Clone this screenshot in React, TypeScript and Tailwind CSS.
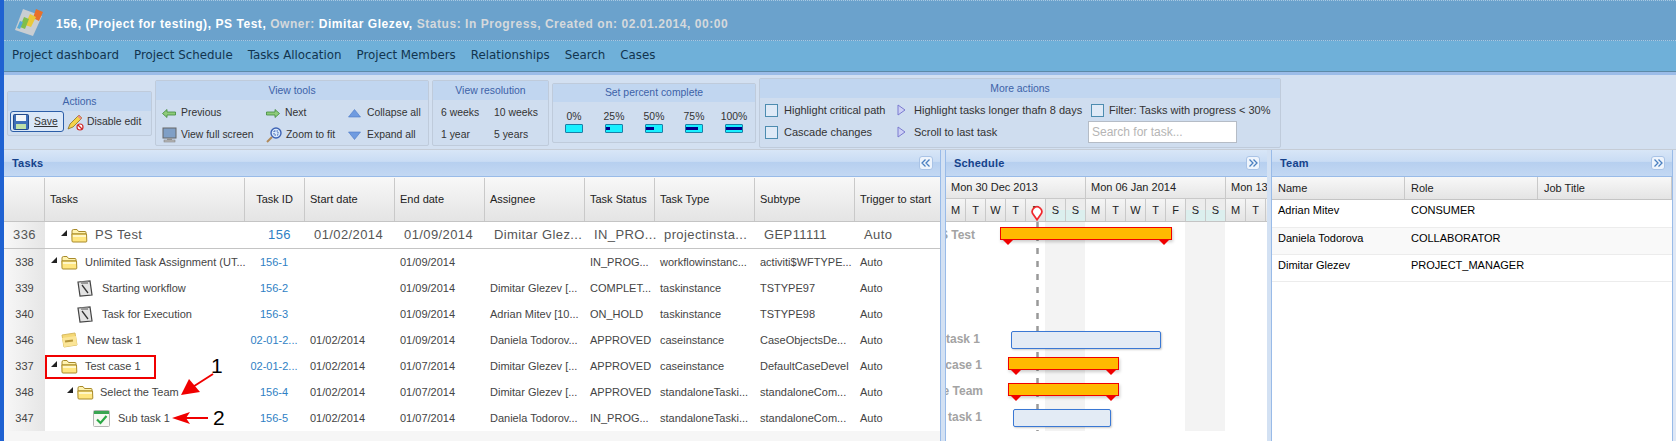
import React from "react";

const ui = "font-['Liberation_Sans',Arial,sans-serif] text-[11px]";

const cols = [
  "w-[41px]",
  "w-[200px]",
  "w-[60px]",
  "w-[90px]",
  "w-[90px]",
  "w-[100px]",
  "w-[70px]",
  "w-[100px]",
  "w-[100px]",
  "w-[84px]",
];

const headers = ["", "Tasks", "Task ID", "Start date", "End date", "Assignee", "Task Status", "Task Type", "Subtype", "Trigger to start"];

type IconKind = "folder" | "note" | "case" | "check";

interface IRow {
  num: string;
  name: string;
  pad: string;
  icon: IconKind;
  arrow?: boolean;
  textGap: string;
  id: string;
  start: string;
  end: string;
  assignee: string;
  status: string;
  type: string;
  sub: string;
}

const rows: IRow[] = [
  { num: "338", name: "Unlimited Task Assignment (UT...", pad: "pl-[6px]", icon: "folder", arrow: true, textGap: "ml-[7px]", id: "156-1", start: "", end: "01/09/2014", assignee: "", status: "IN_PROG...", type: "workflowinstanc...", sub: "activiti$WFTYPE..." },
  { num: "339", name: "Starting workflow", pad: "pl-[32px]", icon: "note", textGap: "ml-[9px]", id: "156-2", start: "", end: "01/09/2014", assignee: "Dimitar Glezev [...", status: "COMPLET...", type: "taskinstance", sub: "TSTYPE97" },
  { num: "340", name: "Task for Execution", pad: "pl-[32px]", icon: "note", textGap: "ml-[9px]", id: "156-3", start: "", end: "01/09/2014", assignee: "Adrian Mitev [10...", status: "ON_HOLD", type: "taskinstance", sub: "TSTYPE98" },
  { num: "346", name: "New task 1", pad: "pl-[16px]", icon: "case", textGap: "ml-[9px]", id: "02-01-2...", start: "01/02/2014", end: "01/09/2014", assignee: "Daniela Todorov...", status: "APPROVED", type: "caseinstance", sub: "CaseObjectsDe..." },
  { num: "337", name: "Test case 1", pad: "pl-[6px]", icon: "folder", arrow: true, textGap: "ml-[7px]", id: "02-01-2...", start: "01/02/2014", end: "01/07/2014", assignee: "Dimitar Glezev [...", status: "APPROVED", type: "caseinstance", sub: "DefaultCaseDevel" },
  { num: "348", name: "Select the Team", pad: "pl-[22px]", icon: "folder", arrow: true, textGap: "ml-[6px]", id: "156-4", start: "01/02/2014", end: "01/07/2014", assignee: "Dimitar Glezev [...", status: "APPROVED", type: "standaloneTaski...", sub: "standaloneCom..." },
  { num: "347", name: "Sub task 1", pad: "pl-[48px]", icon: "check", textGap: "ml-[8px]", id: "156-5", start: "01/02/2014", end: "01/07/2014", assignee: "Daniela Todorov...", status: "IN_PROG...", type: "standaloneTaski...", sub: "standaloneCom..." },
];

const Expander = () => (
  <svg width="6" height="6" viewBox="0 0 6 6" className="mb-[5px] mr-[4px] shrink-0">
    <polygon points="0,6 6,6 6,0" fill="#222" />
  </svg>
);

const Folder = () => (
  <svg width="17" height="15" viewBox="0 0 17 15" className="shrink-0">
    <path d="M1 3 Q1 1.5 2.5 1.5 H6 L7.5 3.5 H14 Q15 3.5 15 4.5 V6 H1 Z" fill="#fff3b0" stroke="#a88a2a" />
    <path d="M.8 6 H15.5 L15.8 13 Q15.8 14 15 14 H2 Q1 14 1 13 Z" fill="#ffe680" stroke="#a88a2a" />
    <rect x="2" y="7" width="13" height="2" fill="#fff7c8" />
  </svg>
);

const Note = () => (
  <svg width="16" height="17" viewBox="0 0 16 17" className="shrink-0">
    <path d="M1 2 L13 1 L15 15 L3 16 Z" fill="#e3e3e3" stroke="#444" strokeWidth="1.2" />
    <path d="M4 1.5 H11 V4 H4 Z" fill="#999" />
    <path d="M5 5 L11 13" stroke="#333" strokeWidth="1.3" />
  </svg>
);

const CaseIcon = () => (
  <svg width="17" height="16" viewBox="0 0 17 16" className="shrink-0">
    <path d="M1 3 L14 1 L16 13 L3 15 Z" fill="#f5d875" stroke="#d8bb60" />
    <path d="M1 6 L15 4 L16 13 L3 15 Z" fill="#fbe597" />
    <rect x="4" y="8" width="8" height="2" fill="#b59538" transform="rotate(-8 8 9)" />
  </svg>
);

const CheckIcon = () => (
  <svg width="17" height="17" viewBox="0 0 17 17" className="shrink-0">
    <rect x=".5" y=".5" width="16" height="16" rx="1" fill="#f8f8f4" stroke="#b5b5b5" />
    <rect x="1" y="1" width="15" height="3" fill="#3aa552" />
    <path d="M4 9.5 L7.5 13 L13.5 6" fill="none" stroke="#2aa845" strokeWidth="2.2" />
  </svg>
);

const TaskIcon = ({ kind }: { kind: IconKind }) => {
  if (kind === "folder") return <Folder />;
  if (kind === "note") return <Note />;
  if (kind === "case") return <CaseIcon />;
  return <CheckIcon />;
};

const Logo = () => (
  <svg width="30" height="30" viewBox="0 0 30 30" className="shrink-0">
    <path d="M9 2 L28 9 L19 29 L1 23 Z" fill="#c9ced2" />
    <path d="M22 2 L29 5 L25 14 L19 11 Z" fill="#e8702a" />
    <path d="M16 7 L22 10 L17 20 L11 18 Z" fill="#e9c93a" />
    <path d="M10 10 L15 12 L11 22 L6 20 Z" fill="#7fbe4b" />
    <path d="M6 14 L9 15 L6 22 L3 21 Z" fill="#56a9d6" />
  </svg>
);

const SideArrow = ({ dir }: { dir: "left" | "right" }) => (
  <svg width="14" height="9" viewBox="0 0 14 9" className="shrink-0">
    <path
      d={dir === "left" ? "M0.5 4.5 L5 .5 V3 H13.5 V6 H5 V8.5 Z" : "M13.5 4.5 L9 .5 V3 H.5 V6 H9 V8.5 Z"}
      fill="#8ecb7a"
      stroke="#3f8a3a"
      strokeWidth=".8"
    />
  </svg>
);

const Monitor = () => (
  <svg width="15" height="16" viewBox="0 0 15 16" className="shrink-0">
    <rect x="1" y="1" width="13" height="10" fill="#7f9fc6" stroke="#666" />
    <rect x="5" y="11" width="5" height="2" fill="#999" />
    <rect x="2" y="13" width="11" height="2" fill="#bbb" stroke="#777" strokeWidth=".5" />
  </svg>
);

const Magnifier = () => (
  <svg width="16" height="16" viewBox="0 0 16 16" className="shrink-0">
    <circle cx="10" cy="6" r="5" fill="#d8e8fa" stroke="#3e63b5" strokeWidth="1.4" />
    <path d="M8 4 H12 V8 H8 Z" fill="none" stroke="#3e63b5" strokeDasharray="1.5 1" />
    <path d="M6 10 L1 15" stroke="#b08a5a" strokeWidth="2" />
  </svg>
);

const BlueTri = ({ up }: { up?: boolean }) => (
  <svg width="13" height="9" viewBox="0 0 13 9" className="shrink-0">
    <polygon points={up ? "6.5,.5 12.5,8 .5,8" : "6.5,8.5 12.5,1 .5,1"} fill="#6f9be0" stroke="#4a78c8" strokeWidth=".6" />
  </svg>
);

const PlayTri = () => (
  <svg width="9" height="12" viewBox="0 0 9 12" className="shrink-0">
    <polygon points="1,1 8,6 1,11" fill="#cdd0f5" stroke="#7a7ad0" />
  </svg>
);

const Floppy = () => (
  <svg width="16" height="16" viewBox="0 0 16 16" className="shrink-0">
    <rect x=".5" y=".5" width="15" height="15" rx="1" fill="#3f6fb8" stroke="#234a8a" />
    <rect x="3" y="1" width="10" height="6" fill="#f3f6fa" />
    <rect x="3" y="10" width="10" height="5" fill="#bfe0a8" />
  </svg>
);

const NoEdit = () => (
  <svg width="17" height="18" viewBox="0 0 17 18" className="shrink-0">
    <path d="M1 16 L3 11 L12 2 L15 5 L6 14 Z" fill="#f4d34a" stroke="#8a6d20" strokeWidth=".8" />
    <path d="M12 2 L15 5 L13.5 6.5 L10.5 3.5 Z" fill="#e88a8a" />
    <circle cx="13" cy="14" r="3" fill="#fff" stroke="#d02a2a" strokeWidth="1.2" />
    <path d="M11 12 L15 16" stroke="#d02a2a" strokeWidth="1.2" />
  </svg>
);

const Collapse = ({ dir }: { dir: "left" | "right" }) => (
  <div className="flex h-[14px] w-[14px] items-center justify-center rounded-[3px] border border-[#a9c3e6] bg-[#eef4fc]">
    <svg width="10" height="8" viewBox="0 0 10 8">
      <path
        d={dir === "left" ? "M4.5 .5 L1 4 L4.5 7.5 M8.5 .5 L5 4 L8.5 7.5" : "M1.5 .5 L5 4 L1.5 7.5 M5.5 .5 L9 4 L5.5 7.5"}
        fill="none"
        stroke="#4a7fc0"
        strokeWidth="1.3"
      />
    </svg>
  </div>
);

const Check = () => <span className="h-[13px] w-[13px] shrink-0 border border-[#4d8cb0] bg-[#dfeaf7]" />;

const Group = ({ title, w, h, head, children }: { title: string; w: string; h: string; head: string; children: React.ReactNode }) => (
  <div className={`${w} ${h} shrink-0 rounded-[2px] border border-[#bfcbdb] bg-[#cfddef]`}>
    <div className={`${head} flex items-center justify-center bg-[#c1d6f0] text-[#3d62a8]`}>{title}</div>
    {children}
  </div>
);

const PanelHead = ({ title, dir }: { title: string; dir: "left" | "right" }) => (
  <div className="relative flex h-[27px] shrink-0 items-center justify-between border-b border-[#99bbe8] bg-[linear-gradient(#d8e6f7,#c9dcf4_44%,#b6cfef_46%,#c3d8f3)] pl-[8px] pr-[7px]">
    <span className="text-[11px] font-bold tracking-[.2px] text-[#15428b]">{title}</span>
    {dir && <Collapse dir={dir} />}
  </div>
);

const percent = [
  { label: "0%", bar: "w-0" },
  { label: "25%", bar: "w-[4px]" },
  { label: "50%", bar: "w-[8px]" },
  { label: "75%", bar: "w-[12px]" },
  { label: "100%", bar: "w-[16px]" },
];

const days = ["M", "T", "W", "T", "F", "S", "S", "M", "T", "W", "T", "F", "S", "S", "M", "T"];

const Bar = ({ cls }: { cls: string }) => (
  <div className={`absolute h-[13px] border border-[#f00000] bg-[#ffb900] shadow-[1px_2px_3px_rgba(0,0,0,.2)] ${cls}`}>
    <svg width="12" height="6" viewBox="0 0 12 6" className="absolute left-[1px] top-[11px]">
      <polygon points="0,0 12,0 6,6" fill="#f00000" />
    </svg>
    <svg width="12" height="6" viewBox="0 0 12 6" className="absolute right-[1px] top-[11px]">
      <polygon points="0,0 12,0 6,6" fill="#f00000" />
    </svg>
  </div>
);

const GanttLabel = ({ cls, text }: { cls: string; text: string }) => (
  <span className={`absolute whitespace-nowrap text-right text-[12px] font-bold text-[#a3a3a3] ${cls}`}>{text}</span>
);

const Gantt = () => (
  <div className="relative flex-1 overflow-hidden bg-white">
    <div className="absolute left-[99px] top-0 h-[209px] w-[40px] bg-[#f3f3f3]" />
    <div className="absolute left-[239px] top-0 h-[209px] w-[40px] bg-[#f3f3f3]" />
    <svg width="3" height="209" className="absolute left-[90px] top-0">
      <line x1="1.5" y1="0" x2="1.5" y2="209" stroke="#999" strokeWidth="2.5" strokeDasharray="6 7" />
    </svg>
    <GanttLabel cls="right-[292px] top-[4px]" text="PS Test" />
    <GanttLabel cls="right-[287px] top-[108px]" text="New task 1" />
    <GanttLabel cls="right-[285px] top-[134px]" text="Test case 1" />
    <GanttLabel cls="right-[284px] top-[160px]" text="Select the Team" />
    <GanttLabel cls="right-[285px] top-[186px]" text="Sub task 1" />
    <Bar cls="left-[54px] top-[5px] w-[172px]" />
    <div className="absolute left-[65px] top-[109px] h-[18px] w-[150px] rounded-[2px] border border-[#3a78d4] bg-[#e3ebf5] shadow-[1px_1px_2px_rgba(0,0,0,.2)]" />
    <Bar cls="left-[62px] top-[135px] w-[111px]" />
    <Bar cls="left-[62px] top-[161px] w-[111px]" />
    <div className="absolute left-[67px] top-[187px] h-[18px] w-[98px] rounded-[2px] border border-[#3a78d4] bg-[#e3ebf5] shadow-[1px_1px_2px_rgba(0,0,0,.2)]" />
  </div>
);

const Annotations = () => (
  <>
    <div className="absolute left-[45px] top-[355px] h-[24px] w-[111px] border-2 border-[#f00000]" />
    <span className="absolute left-[211px] top-[354px] text-[21px] leading-[24px] text-black">1</span>
    <span className="absolute left-[213px] top-[406px] text-[21px] leading-[24px] text-black">2</span>
    <svg width="50" height="32" viewBox="0 0 50 32" className="absolute left-[176px] top-[370px]">
      <path d="M37 4 L12 20" stroke="#f00000" strokeWidth="2" />
      <polygon points="5,25 24,22 13,9" fill="#f00000" />
    </svg>
    <svg width="44" height="14" viewBox="0 0 44 14" className="absolute left-[170px] top-[411px]">
      <path d="M12 7 H38" stroke="#f00000" strokeWidth="2" />
      <polygon points="2,7 20,1 16,7 20,13" fill="#f00000" />
    </svg>
  </>
);

const App = () => {
  return (
    <div className={`${ui} relative flex h-[441px] w-[1676px] overflow-hidden bg-[#dfe8f6] text-[#444]`}>
      <div className="w-[4px] shrink-0 bg-[#1f62d2]" />
      <div className="flex min-w-0 flex-1 flex-col">
        <header className="flex h-[41px] shrink-0 items-center gap-[12px] border-y border-dotted border-[#a9c9e2] bg-[#6ba2cc] pl-[10px] pt-[2px] text-[12px] font-bold tracking-[.55px] text-white">
          <Logo />
          <p className="mt-[4px] whitespace-nowrap">
            156, (Project for testing), PS Test, <span className="text-[#d5d9dc]">Owner:</span> Dimitar Glezev, <span className="text-[#d5d9dc]">Status: In Progress, Created on: 02.01.2014, 00:00</span>
          </p>
        </header>
        <nav className="flex h-[31px] shrink-0 items-center gap-[15px] border-b border-[#5d8aa8] bg-[#6fb0d9] pl-[8px] font-['DejaVu_Sans',sans-serif] text-[11.85px] text-[#11344f]">
          <span>Project dashboard</span>
          <span>Project Schedule</span>
          <span>Tasks Allocation</span>
          <span>Project Members</span>
          <span>Relationships</span>
          <span>Search</span>
          <span>Cases</span>
        </nav>

        <section className="flex h-[78px] shrink-0 items-center gap-[3px] border-t-[3px] border-b border-t-[#9bbce8] border-b-[#c5ccd6] bg-[#d3e0f1] pl-[3px] pt-[2px] text-[10.4px] text-[#333]">
          <Group title="Actions" w="w-[145px]" h="mt-[1px] h-[45px]" head="h-[19px]">
            <div className="flex items-center pl-[2px]">
              <div className="flex h-[21px] w-[54px] items-center gap-[5px] rounded-[3px] border border-[#2c5ea8] bg-[#dbe8f8] pl-[2px]">
                <Floppy />
                <span className="underline">Save</span>
              </div>
              <div className="ml-[3px] flex items-center gap-[3px]">
                <NoEdit />
                <span>Disable edit</span>
              </div>
            </div>
          </Group>
          <Group title="View tools" w="w-[274px]" h="h-[66px]" head="h-[19px]">
            <div className="grid grid-cols-[104px_82px_1fr] pl-[6px] pt-[2px]">
              <div className="flex h-[22px] items-center gap-[5px]"><SideArrow dir="left" />Previous</div>
              <div className="flex h-[22px] items-center gap-[5px]"><SideArrow dir="right" />Next</div>
              <div className="flex h-[22px] items-center gap-[6px]"><BlueTri up />Collapse all</div>
              <div className="flex h-[22px] items-center gap-[4px]"><Monitor />View full screen</div>
              <div className="flex h-[22px] items-center gap-[4px]"><Magnifier />Zoom to fit</div>
              <div className="flex h-[22px] items-center gap-[6px]"><BlueTri />Expand all</div>
            </div>
          </Group>
          <Group title="View resolution" w="w-[117px]" h="h-[66px]" head="h-[19px]">
            <div className="grid grid-cols-[53px_1fr] pl-[8px] pt-[2px]">
              <div className="flex h-[22px] items-center">6 weeks</div>
              <div className="flex h-[22px] items-center">10 weeks</div>
              <div className="flex h-[22px] items-center">1 year</div>
              <div className="flex h-[22px] items-center">5 years</div>
            </div>
          </Group>
          <Group title="Set percent complete" w="w-[204px]" h="h-[60px]" head="h-[18px]">
            <div className="flex justify-between px-[6px] pt-[8px]">
              {percent.map((p) => (
                <div key={p.label} className="flex w-[30px] flex-col items-center leading-[13px]">
                  <span>{p.label}</span>
                  <div className="mt-[1px] flex h-[9px] w-[18px] items-center rounded-[1px] border border-[#1a7fa8] bg-[#19f0ff]">
                    <div className={`${p.bar} h-[3px] bg-[#00008a]`} />
                  </div>
                </div>
              ))}
            </div>
          </Group>
          <Group title="More actions" w="w-[522px]" h="h-[70px]" head="h-[19px]">
            <div className="grid grid-cols-[132px_194px_1fr] pl-[5px] pt-[1px] text-[11px]">
              <div className="flex h-[22px] items-center gap-[6px]"><Check />Highlight critical path</div>
              <div className="flex h-[22px] items-center gap-[8px]"><PlayTri />Highlight tasks longer thafn 8 days</div>
              <div className="flex h-[22px] items-center gap-[5px]"><Check />Filter: Tasks with progress &lt; 30%</div>
              <div className="flex h-[22px] items-center gap-[6px]"><Check />Cascade changes</div>
              <div className="flex h-[22px] items-center gap-[8px]"><PlayTri />Scroll to last task</div>
              <div className="-ml-[3px] flex h-[22px] w-[149px] items-center border border-[#b5bcc6] bg-white pl-[3px] text-[12px] text-[#b5b5b5]">Search for task...</div>
            </div>
          </Group>
        </section>

        <main className="flex min-h-0 flex-1">
          <div className="flex w-[936px] shrink-0 flex-col bg-[#f6f6f6]">
            <PanelHead title="Tasks" dir="left" />
            <div className="flex h-[45px] shrink-0 border-b border-[#c4c4c4] bg-[linear-gradient(#f8f8f8,#e4e4e4)] pt-[1px] text-[#222]">
              {headers.map((h, i) => (
                <div
                  key={h + i}
                  className={`${cols[i]} flex shrink-0 items-center border-r border-[#c9c9c9] ${i === 2 ? "justify-center" : "pl-[5px]"} ${i === 9 ? "border-r-0" : ""}`}
                >
                  {h}
                </div>
              ))}
            </div>
            <div className="flex h-[27px] shrink-0 items-center border-b border-[#c4c4c4] bg-white text-[13px] tracking-[.4px] text-[#555]">
              <div className={`${cols[0]} flex h-full shrink-0 items-center justify-center bg-[linear-gradient(90deg,#f7f7f7,#e6e6e6)]`}>336</div>
              <div className={`${cols[1]} flex shrink-0 items-center pl-[16px]`}>
                <Expander />
                <Folder />
                <span className="ml-[7px]">PS Test</span>
              </div>
              <div className={`${cols[2]} shrink-0 pl-[9px] text-center text-[#2f7fc4]`}>156</div>
              <div className={`${cols[3]} shrink-0 pl-[9px]`}>01/02/2014</div>
              <div className={`${cols[4]} shrink-0 pl-[9px]`}>01/09/2014</div>
              <div className={`${cols[5]} shrink-0 pl-[9px]`}>Dimitar Glez...</div>
              <div className={`${cols[6]} shrink-0 whitespace-nowrap pl-[9px]`}>IN_PRO...</div>
              <div className={`${cols[7]} shrink-0 pl-[9px]`}>projectinsta...</div>
              <div className={`${cols[8]} shrink-0 pl-[9px]`}>GEP11111</div>
              <div className={`${cols[9]} shrink-0 pl-[9px]`}>Auto</div>
            </div>
            {rows.map((r) => (
              <div key={r.num} className="flex h-[26px] shrink-0 items-center bg-white">
                <div className={`${cols[0]} flex h-full shrink-0 items-center justify-center bg-[linear-gradient(90deg,#f7f7f7,#e6e6e6)]`}>{r.num}</div>
                <div className={`${cols[1]} ${r.pad} flex shrink-0 items-center whitespace-nowrap`}>
                  {r.arrow && <Expander />}
                  <TaskIcon kind={r.icon} />
                  <span className={r.textGap}>{r.name}</span>
                </div>
                <div className={`${cols[2]} shrink-0 whitespace-nowrap pr-[2px] text-center text-[#2f7fc4]`}>{r.id}</div>
                <div className={`${cols[3]} shrink-0 pl-[5px]`}>{r.start}</div>
                <div className={`${cols[4]} shrink-0 pl-[5px]`}>{r.end}</div>
                <div className={`${cols[5]} shrink-0 whitespace-nowrap pl-[5px]`}>{r.assignee}</div>
                <div className={`${cols[6]} shrink-0 whitespace-nowrap pl-[5px]`}>{r.status}</div>
                <div className={`${cols[7]} shrink-0 whitespace-nowrap pl-[5px]`}>{r.type}</div>
                <div className={`${cols[8]} shrink-0 whitespace-nowrap pl-[5px]`}>{r.sub}</div>
                <div className={`${cols[9]} shrink-0 pl-[5px]`}>Auto</div>
              </div>
            ))}
          </div>

          <div className="w-[6px] shrink-0 border-x border-[#99bbe8] bg-[#d3e1f3]" />

          <div className="flex w-[321px] shrink-0 flex-col overflow-hidden bg-white">
            <PanelHead title="Schedule" dir="right" />
            <div className="flex h-[22px] shrink-0 overflow-hidden border-b border-[#c9c9c9] bg-[linear-gradient(#f8f8f8,#e6e6e6)] text-[11px] text-[#222]">
              <div className="flex w-[140px] shrink-0 items-center whitespace-nowrap border-r border-[#c9c9c9] pl-[5px]">Mon 30 Dec 2013</div>
              <div className="flex w-[140px] shrink-0 items-center whitespace-nowrap border-r border-[#c9c9c9] pl-[5px]">Mon 06 Jan 2014</div>
              <div className="flex w-[41px] shrink-0 items-center whitespace-nowrap pl-[5px]">Mon 13</div>
            </div>
            <div className="relative flex h-[23px] shrink-0 border-b border-[#c4c4c4] bg-[linear-gradient(#f5f5f5,#e4e4e4)] text-[#222]">
              {days.map((d, i) => (
                <div
                  key={i}
                  className={`flex w-[20px] shrink-0 items-center justify-center border-r border-[#c9c9c9] ${i === 5 || i === 6 || i === 12 || i === 13 ? "bg-[linear-gradient(#ececec_50%,#dcefee_50%)]" : ""}`}
                >
                  {d}
                </div>
              ))}
              <svg width="12" height="16" viewBox="0 0 14 18" className="absolute left-[85px] top-[6px]">
                <path d="M7 17 L2.5 10.5 A5.5 5.5 0 1 1 11.5 10.5 Z" fill="#fff" stroke="#f0282d" strokeWidth="2" />
              </svg>
            </div>
            <Gantt />
          </div>

          <div className="w-[5px] shrink-0 border-r border-[#99bbe8] bg-[#d3e1f3]" />

          <div className="flex w-[400px] shrink-0 flex-col bg-white text-black">
            <PanelHead title="Team" dir="right" />
            <div className="flex h-[23px] shrink-0 border-b border-[#c4c4c4] bg-[linear-gradient(#f8f8f8,#e4e4e4)] text-[#222]">
              <div className="flex w-[133px] items-center border-r border-[#c9c9c9] pl-[6px]">Name</div>
              <div className="flex w-[133px] items-center border-r border-[#c9c9c9] pl-[6px]">Role</div>
              <div className="flex flex-1 items-center border-r border-[#c9c9c9] pl-[6px]">Job Title</div>
            </div>
            <div className="flex h-[28px] shrink-0 border-b border-[#ececec] pt-[2px]">
              <div className="w-[133px] pl-[6px]">Adrian Mitev</div>
              <div className="pl-[6px]">CONSUMER</div>
            </div>
            <div className="flex h-[27px] shrink-0 border-b border-[#ececec] bg-[#f9f9f9] pt-[2px]">
              <div className="w-[133px] pl-[6px]">Daniela Todorova</div>
              <div className="pl-[6px]">COLLABORATOR</div>
            </div>
            <div className="flex h-[27px] shrink-0 border-b border-[#ececec] pt-[2px]">
              <div className="w-[133px] pl-[6px]">Dimitar Glezev</div>
              <div className="pl-[6px]">PROJECT_MANAGER</div>
            </div>
          </div>

          <div className="flex-1 border-l border-[#99bbe8] bg-[#dfe8f6]" />
        </main>
      </div>
      <Annotations />
    </div>
  );
};

export default App;
